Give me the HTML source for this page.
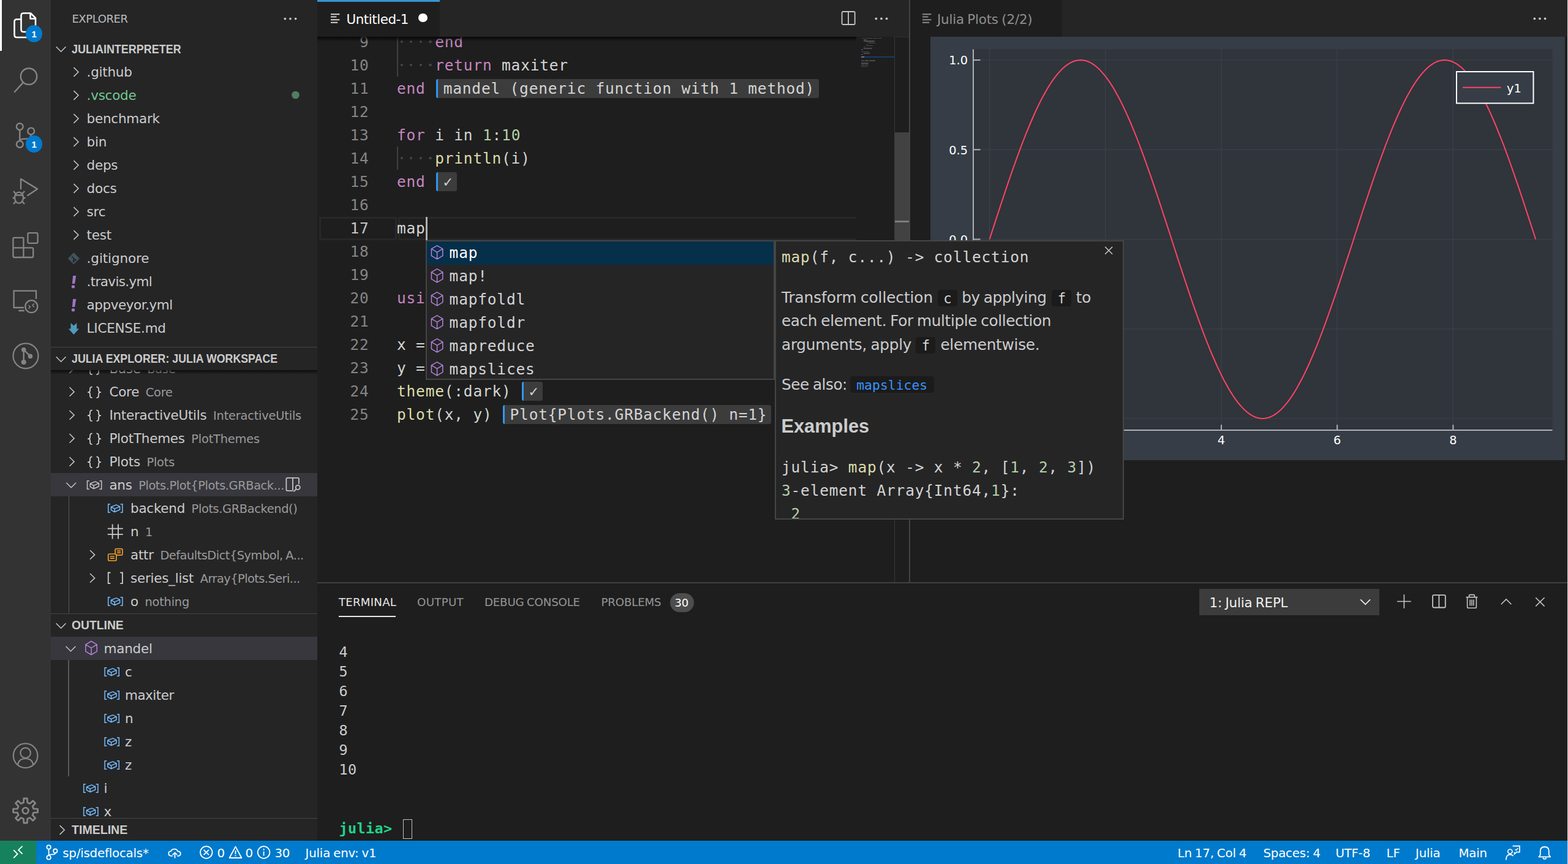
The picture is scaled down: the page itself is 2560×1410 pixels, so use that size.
<!DOCTYPE html>
<html lang="en"><head><meta charset="utf-8"><title>Untitled-1 - JuliaInterpreter - Visual Studio Code</title><style>
html,body{margin:0;padding:0;background:#1e1e1e;}
body{width:2560px;height:1410px;overflow:hidden;position:relative;font-family:'DejaVu Sans','Liberation Sans',sans-serif;color:#cccccc;}
div,span.t,svg{position:absolute;}
div{box-sizing:border-box;}
.t{white-space:pre;line-height:1;display:block;}
.ui{font-family:'DejaVu Sans','Liberation Sans',sans-serif;word-spacing:-0.05em;}
.uib{font-family:'Liberation Sans','DejaVu Sans',sans-serif;}
.mono{font-family:'DejaVu Sans Mono','Liberation Mono',monospace;}
svg{overflow:visible;}
</style></head>
<body>
<!-- p_activity -->
<div class="abs" style="left:0.00px;top:0.00px;width:83.00px;height:1372.00px;background:#333333;overflow:hidden;"><div style="left:0.00px;top:0.00px;width:3.00px;height:83.00px;background:#ffffff;"></div><svg style="left:0.00px;top:0.00px;" width="83.00" height="1372.00" viewBox="0 0 83.00 1372.00" fill="none"><g stroke="#fff" stroke-width="2.6" fill="none" stroke-linejoin="round"><path d="M34 31.5H27.5Q23.5 31.5 23.5 35.5V57Q23.5 61 27.5 61H44Q47.5 61 47.5 57V52"/><path d="M38.5 21.5H50L58 29.5V48Q58 52 54 52H38.5Q34.5 52 34.5 48V25.5Q34.5 21.5 38.5 21.5Z"/><path d="M49.5 22V30.5H57.5"/></g><g stroke="#858585" stroke-width="2.4" fill="none"><circle cx="47" cy="124.7" r="13.2"/><path d="M37.8 134.6L23.2 150.8"/></g><g stroke="#858585" stroke-width="2.4" fill="none"><circle cx="32.3" cy="206.6" r="5.4"/><circle cx="50.7" cy="214" r="5.4"/><circle cx="32.3" cy="235.4" r="5.4"/><path d="M32.3 212V230M50.7 219.4Q50.7 226.6 43 226.6H40Q32.3 226.6 32.3 231"/></g><g stroke="#858585" stroke-width="2.4" fill="none" stroke-linejoin="round"><path d="M34 309V292L61 308.4L44.4 319.4"/><ellipse cx="31" cy="322.6" rx="7" ry="9"/><path d="M24.5 318.5H37.5M22 312L25.5 316M40 312L36.5 316M20.5 323H24M38 323H41.5M22 333L25.5 329M40 333L36.5 329"/></g><g stroke="#858585" stroke-width="2.3" fill="none" stroke-linejoin="round"><rect x="45.4" y="380.2" width="16.2" height="16.6" rx="2"/><path d="M38.4 387.8H23.4Q21.4 387.8 21.4 389.8V418Q21.4 420 23.4 420H52.2Q54.2 420 54.2 418V406.3Q54.2 404.3 52.2 404.3H21.4M38.4 387.8V420"/></g><g stroke="#858585" stroke-width="2.3" fill="none"><path d="M59 488V474.6H22.6V502H39M30.4 507H39.7"/><circle cx="51.3" cy="500.2" r="10"/><path d="M46.6 498L49.4 500.9L46.6 503.8M55.8 495.4L53 498.3L55.8 501.2" stroke-width="1.6"/></g><g stroke="#858585" stroke-width="2.2" fill="none"><circle cx="42" cy="580.8" r="20.5"/><path d="M38.7 570.7V591M38.7 570.7L49.4 581.4" stroke-width="2.4"/></g><g fill="#858585"><circle cx="38.7" cy="570.7" r="3.8"/><circle cx="49.4" cy="581.4" r="3.8"/><circle cx="38.7" cy="591" r="4"/></g><g stroke="#858585" stroke-width="2.2" fill="none"><circle cx="41.6" cy="1233.2" r="19.8"/><circle cx="41.6" cy="1228.7" r="8.3"/><path d="M29 1248.2Q30.5 1238 41.6 1238Q52.7 1238 54.2 1248.2"/></g><path d="M38.5 1309.8L38.8 1303.0L44.4 1303.0L44.7 1309.8L48.8 1311.5L53.7 1306.8L57.8 1310.9L53.1 1315.8L54.8 1319.9L61.6 1320.2L61.6 1325.8L54.8 1326.1L53.1 1330.2L57.8 1335.1L53.7 1339.2L48.8 1334.5L44.7 1336.2L44.4 1343.0L38.8 1343.0L38.5 1336.2L34.4 1334.5L29.5 1339.2L25.4 1335.1L30.1 1330.2L28.4 1326.1L21.6 1325.8L21.6 1320.2L28.4 1319.9L30.1 1315.8L25.4 1310.9L29.5 1306.8L34.4 1311.5Z" stroke="#858585" stroke-width="2.8" fill="none" stroke-linejoin="round"/><circle cx="41.6" cy="1323" r="4.8" stroke="#858585" stroke-width="2.8" fill="none"/></svg><div style="left:41.70px;top:41.20px;width:27.60px;height:27.60px;background:#007acc;border-radius:50%;"></div><span class="t uib" style="left:51.40px;top:47.70px;font-size:15.00px;color:#fff;font-weight:700;">1</span><div style="left:41.70px;top:221.00px;width:27.60px;height:27.60px;background:#007acc;border-radius:50%;"></div><span class="t uib" style="left:51.40px;top:227.50px;font-size:15.00px;color:#fff;font-weight:700;">1</span></div>
<!-- p_sidebar -->
<div style="left:83.00px;top:0.00px;width:435.00px;height:1372.00px;background:#252526;overflow:hidden;"><div style="left:-83.00px;top:0.00px;width:518.00px;height:1372.00px;"><span class="t ui" style="left:117.40px;top:22.35px;font-size:18.02px;color:#bbbbbb;letter-spacing:-0.41px;">EXPLORER</span><svg style="left:0.00px;top:0.00px;" width="518.00" height="10.00" viewBox="0 0 518.00 10.00" fill="none"><path d="M91.7 76.3L99.6 84.2L107.5 76.3" stroke="#c5c5c5" stroke-width="1.55"/></svg><span class="t uib" style="left:117.40px;top:69.57px;font-size:20.00px;color:#cccccc;font-weight:700;transform:scaleX(0.898);transform-origin:0 0;">JULIAINTERPRETER</span><span class="t ui" style="left:141.60px;top:107.21px;font-size:21.50px;color:#cccccc;letter-spacing:-0.25px;">.github</span><span class="t ui" style="left:141.60px;top:145.21px;font-size:21.50px;color:#73c991;letter-spacing:-0.25px;">.vscode</span><span class="t ui" style="left:141.60px;top:183.21px;font-size:21.50px;color:#cccccc;letter-spacing:-0.25px;">benchmark</span><span class="t ui" style="left:141.60px;top:221.21px;font-size:21.50px;color:#cccccc;letter-spacing:-0.25px;">bin</span><span class="t ui" style="left:141.60px;top:259.21px;font-size:21.50px;color:#cccccc;letter-spacing:-0.25px;">deps</span><span class="t ui" style="left:141.60px;top:297.21px;font-size:21.50px;color:#cccccc;letter-spacing:-0.25px;">docs</span><span class="t ui" style="left:141.60px;top:335.21px;font-size:21.50px;color:#cccccc;letter-spacing:-0.25px;">src</span><span class="t ui" style="left:141.60px;top:373.21px;font-size:21.50px;color:#cccccc;letter-spacing:-0.25px;">test</span><span class="t ui" style="left:141.60px;top:411.21px;font-size:21.50px;color:#cccccc;letter-spacing:-0.10px;">.gitignore</span><span class="t ui" style="left:141.60px;top:449.21px;font-size:21.50px;color:#cccccc;letter-spacing:-0.64px;">.travis.yml</span><span class="t ui" style="left:141.60px;top:487.21px;font-size:21.50px;color:#cccccc;letter-spacing:-0.45px;">appveyor.yml</span><span class="t ui" style="left:141.60px;top:525.21px;font-size:21.50px;color:#cccccc;letter-spacing:-0.25px;">LICENSE.md</span><div style="left:0.00px;top:604.00px;width:518.00px;height:396.50px;overflow:hidden;"><div style="left:0.00px;top:-604.00px;width:518.00px;height:1410.00px;"><span class="t ui" style="left:178.4px;top:591.21px;font-size:21.50px;color:#cccccc;letter-spacing:-0.25px">Base<span style="font-size:19.46px;color:#9a9a9a;margin-left:10.5px;letter-spacing:-0.22px">Base</span></span><span class="t ui" style="left:178.4px;top:629.21px;font-size:21.50px;color:#cccccc;letter-spacing:-0.25px">Core<span style="font-size:19.46px;color:#9a9a9a;margin-left:10.5px;letter-spacing:-0.22px">Core</span></span><span class="t ui" style="left:178.4px;top:667.21px;font-size:21.50px;color:#cccccc;letter-spacing:-0.25px">InteractiveUtils<span style="font-size:19.46px;color:#9a9a9a;margin-left:10.5px;letter-spacing:-0.22px">InteractiveUtils</span></span><span class="t ui" style="left:178.4px;top:705.21px;font-size:21.50px;color:#cccccc;letter-spacing:-0.25px">PlotThemes<span style="font-size:19.46px;color:#9a9a9a;margin-left:10.5px;letter-spacing:-0.22px">PlotThemes</span></span><span class="t ui" style="left:178.4px;top:743.21px;font-size:21.50px;color:#cccccc;letter-spacing:-0.25px">Plots<span style="font-size:19.46px;color:#9a9a9a;margin-left:10.5px;letter-spacing:-0.22px">Plots</span></span><div style="left:83.00px;top:772.30px;width:435.00px;height:37.60px;background:#37373d;"></div><span class="t ui" style="left:178.4px;top:781.21px;font-size:21.50px;color:#cccccc;letter-spacing:-0.25px">ans<span style="font-size:19.46px;color:#9a9a9a;margin-left:10.5px;letter-spacing:-0.44px">Plots.Plot{Plots.GRBack...</span></span><span class="t ui" style="left:213.0px;top:819.21px;font-size:21.50px;color:#cccccc;letter-spacing:-0.25px">backend<span style="font-size:19.46px;color:#9a9a9a;margin-left:10.5px;letter-spacing:-0.41px">Plots.GRBackend()</span></span><span class="t ui" style="left:213.0px;top:857.21px;font-size:21.50px;color:#cccccc;letter-spacing:-0.25px">n<span style="font-size:19.46px;color:#9a9a9a;margin-left:10.5px;letter-spacing:-0.22px">1</span></span><span class="t ui" style="left:213.0px;top:895.21px;font-size:21.50px;color:#cccccc;letter-spacing:-0.25px">attr<span style="font-size:19.46px;color:#9a9a9a;margin-left:10.5px;letter-spacing:-0.52px">DefaultsDict{Symbol, A...</span></span><span class="t ui" style="left:213.0px;top:933.21px;font-size:21.50px;color:#cccccc;letter-spacing:-0.25px">series_list<span style="font-size:19.46px;color:#9a9a9a;margin-left:10.5px;letter-spacing:-0.58px">Array{Plots.Seri...</span></span><span class="t ui" style="left:213.0px;top:971.21px;font-size:21.50px;color:#cccccc;letter-spacing:-0.25px">o<span style="font-size:19.46px;color:#9a9a9a;margin-left:10.5px;letter-spacing:-0.22px">nothing</span></span><div style="left:111.60px;top:810.00px;width:1.60px;height:190.00px;background:#585858;"></div><svg style="left:0.00px;top:0.00px;" width="518.00" height="10.00" viewBox="0 0 518.00 10.00" fill="none"><path d="M113.5 594.0L121.1 601.4L113.5 608.8" stroke="#c5c5c5" stroke-width="1.55"/><g transform="translate(143.00 592.40)" stroke="#cccccc" stroke-width="1.8" fill="none" stroke-linejoin="round"><path d="M7.6 0.9C4.6 0.9 4 2.2 4 4.6V6.8C4 8.8 3 9.8 0.8 9.8C3 9.8 4 10.8 4 12.8V15C4 17.4 4.6 18.7 7.6 18.7M14.4 0.9C17.4 0.9 18 2.2 18 4.6V6.8C18 8.8 19 9.8 21.2 9.8C19 9.8 18 10.8 18 12.8V15C18 17.4 17.4 18.7 14.4 18.7"/></g><path d="M113.5 632.0L121.1 639.4L113.5 646.8" stroke="#c5c5c5" stroke-width="1.55"/><g transform="translate(143.00 630.40)" stroke="#cccccc" stroke-width="1.8" fill="none" stroke-linejoin="round"><path d="M7.6 0.9C4.6 0.9 4 2.2 4 4.6V6.8C4 8.8 3 9.8 0.8 9.8C3 9.8 4 10.8 4 12.8V15C4 17.4 4.6 18.7 7.6 18.7M14.4 0.9C17.4 0.9 18 2.2 18 4.6V6.8C18 8.8 19 9.8 21.2 9.8C19 9.8 18 10.8 18 12.8V15C18 17.4 17.4 18.7 14.4 18.7"/></g><path d="M113.5 670.0L121.1 677.4L113.5 684.8" stroke="#c5c5c5" stroke-width="1.55"/><g transform="translate(143.00 668.40)" stroke="#cccccc" stroke-width="1.8" fill="none" stroke-linejoin="round"><path d="M7.6 0.9C4.6 0.9 4 2.2 4 4.6V6.8C4 8.8 3 9.8 0.8 9.8C3 9.8 4 10.8 4 12.8V15C4 17.4 4.6 18.7 7.6 18.7M14.4 0.9C17.4 0.9 18 2.2 18 4.6V6.8C18 8.8 19 9.8 21.2 9.8C19 9.8 18 10.8 18 12.8V15C18 17.4 17.4 18.7 14.4 18.7"/></g><path d="M113.5 708.0L121.1 715.4L113.5 722.8" stroke="#c5c5c5" stroke-width="1.55"/><g transform="translate(143.00 706.40)" stroke="#cccccc" stroke-width="1.8" fill="none" stroke-linejoin="round"><path d="M7.6 0.9C4.6 0.9 4 2.2 4 4.6V6.8C4 8.8 3 9.8 0.8 9.8C3 9.8 4 10.8 4 12.8V15C4 17.4 4.6 18.7 7.6 18.7M14.4 0.9C17.4 0.9 18 2.2 18 4.6V6.8C18 8.8 19 9.8 21.2 9.8C19 9.8 18 10.8 18 12.8V15C18 17.4 17.4 18.7 14.4 18.7"/></g><path d="M113.5 746.0L121.1 753.4L113.5 760.8" stroke="#c5c5c5" stroke-width="1.55"/><g transform="translate(143.00 744.40)" stroke="#cccccc" stroke-width="1.8" fill="none" stroke-linejoin="round"><path d="M7.6 0.9C4.6 0.9 4 2.2 4 4.6V6.8C4 8.8 3 9.8 0.8 9.8C3 9.8 4 10.8 4 12.8V15C4 17.4 4.6 18.7 7.6 18.7M14.4 0.9C17.4 0.9 18 2.2 18 4.6V6.8C18 8.8 19 9.8 21.2 9.8C19 9.8 18 10.8 18 12.8V15C18 17.4 17.4 18.7 14.4 18.7"/></g><path d="M108.3 787.8L116.2 795.7L124.1 787.8" stroke="#c5c5c5" stroke-width="1.55"/><g transform="translate(141.60 783.90)" stroke="#c5c5c5" stroke-width="1.5" fill="none"><path d="M4.2 0.8H0.9V14.4H4.2M20.8 0.8H24.1V14.4H20.8" /><path d="M5.6 5.4L14 2L19.8 4.7L11.4 8.5ZM5.6 5.4V10.5L11.4 13.6V8.5M11.4 13.6L19.8 9.9V4.7" stroke-linejoin="round"/></g><g transform="translate(175.80 821.90)" stroke="#75beff" stroke-width="1.5" fill="none"><path d="M4.2 0.8H0.9V14.4H4.2M20.8 0.8H24.1V14.4H20.8" /><path d="M5.6 5.4L14 2L19.8 4.7L11.4 8.5ZM5.6 5.4V10.5L11.4 13.6V8.5M11.4 13.6L19.8 9.9V4.7" stroke-linejoin="round"/></g><g transform="translate(175.80 855.40)" stroke="#cccccc" stroke-width="1.8" fill="none"><path d="M7.8 0V24M17.2 0V24M0 7.3H25M0 16.7H25"/></g><path d="M147.0 898.0L154.6 905.4L147.0 912.8" stroke="#c5c5c5" stroke-width="1.55"/><g transform="translate(175.80 894.80)" stroke="#ee9d28" stroke-width="1.7" fill="none"><rect x="12.3" y="0.9" width="11.8" height="10.2" rx="1.8"/><path d="M15.3 4.4H21.3M15.3 7.4H21.3"/><rect x="0.9" y="9.2" width="13.2" height="11" rx="1.8" fill="#252526"/><path d="M3.9 13.2H11.1M3.9 16.4H11.1"/></g><path d="M147.0 936.0L154.6 943.4L147.0 950.8" stroke="#c5c5c5" stroke-width="1.55"/><g transform="translate(175.80 933.60)" stroke="#cccccc" stroke-width="1.8" fill="none"><path d="M4.6 0.9H0.9V18.6H4.6M20.4 0.9H24.1V18.6H20.4"/></g><g transform="translate(175.80 973.90)" stroke="#75beff" stroke-width="1.5" fill="none"><path d="M4.2 0.8H0.9V14.4H4.2M20.8 0.8H24.1V14.4H20.8" /><path d="M5.6 5.4L14 2L19.8 4.7L11.4 8.5ZM5.6 5.4V10.5L11.4 13.6V8.5M11.4 13.6L19.8 9.9V4.7" stroke-linejoin="round"/></g><g stroke="#c5c5c5" stroke-width="1.8" fill="none"><path d="M488 790V781.8Q488 779.8 486 779.8H469.4Q467.4 779.8 467.4 781.8V798.8Q467.4 800.8 469.4 800.8H477.8M478 779.8V800.8"/><circle cx="486.3" cy="795.4" r="3.5"/><path d="M483.8 798L479.4 802.4"/></g></svg></div></div><div style="left:83.00px;top:604.00px;width:435.00px;height:7.00px;background:linear-gradient(#000000aa,#00000000);"></div><div style="left:83.00px;top:565.60px;width:435.00px;height:1.50px;background:#454546;"></div><svg style="left:0.00px;top:0.00px;" width="518.00" height="10.00" viewBox="0 0 518.00 10.00" fill="none"><path d="M91.7 582.3L99.6 590.2L107.5 582.3" stroke="#c5c5c5" stroke-width="1.55"/></svg><span class="t uib" style="left:117.40px;top:574.77px;font-size:20.00px;color:#cccccc;font-weight:700;transform:scaleX(0.889);transform-origin:0 0;">JULIA EXPLORER: JULIA WORKSPACE</span><div style="left:83.00px;top:1000.60px;width:435.00px;height:1.50px;background:#454546;"></div><svg style="left:0.00px;top:0.00px;" width="518.00" height="10.00" viewBox="0 0 518.00 10.00" fill="none"><path d="M91.7 1017.3L99.6 1025.2L107.5 1017.3" stroke="#c5c5c5" stroke-width="1.55"/></svg><span class="t uib" style="left:117.40px;top:1010.37px;font-size:20.00px;color:#cccccc;font-weight:700;transform:scaleX(0.965);transform-origin:0 0;">OUTLINE</span><div style="left:0.00px;top:1039.00px;width:518.00px;height:296.00px;overflow:hidden;"><div style="left:0.00px;top:-1039.00px;width:518.00px;height:1410.00px;"><div style="left:83.00px;top:1039.30px;width:435.00px;height:37.60px;background:#37373d;"></div><span class="t ui" style="left:169.60px;top:1047.81px;font-size:21.50px;color:#cccccc;letter-spacing:-0.25px;">mandel</span><span class="t ui" style="left:204.00px;top:1085.81px;font-size:21.50px;color:#cccccc;letter-spacing:-0.25px;">c</span><span class="t ui" style="left:204.00px;top:1123.81px;font-size:21.50px;color:#cccccc;letter-spacing:-0.50px;">maxiter</span><span class="t ui" style="left:204.00px;top:1161.81px;font-size:21.50px;color:#cccccc;letter-spacing:-0.25px;">n</span><span class="t ui" style="left:204.00px;top:1199.81px;font-size:21.50px;color:#cccccc;letter-spacing:-0.25px;">z</span><span class="t ui" style="left:204.00px;top:1237.81px;font-size:21.50px;color:#cccccc;letter-spacing:-0.25px;">z</span><span class="t ui" style="left:169.60px;top:1275.81px;font-size:21.50px;color:#cccccc;letter-spacing:-0.25px;">i</span><span class="t ui" style="left:169.60px;top:1313.81px;font-size:21.50px;color:#cccccc;letter-spacing:-0.25px;">x</span><div style="left:111.40px;top:1077.00px;width:1.60px;height:190.00px;background:#585858;"></div><svg style="left:0.00px;top:0.00px;" width="518.00" height="10.00" viewBox="0 0 518.00 10.00" fill="none"><path d="M107.6 1054.8L115.5 1062.7L123.4 1054.8" stroke="#c5c5c5" stroke-width="1.55"/><g transform="translate(138.00 1045.50)" stroke="#b180d7" stroke-width="1.55" fill="none"><path d="M11 1L20.2 6.3V17.6L11 23L1.8 17.6V6.3ZM1.8 6.3L11 11.8L20.2 6.3M11 11.8V23" stroke-linejoin="round"/></g><g transform="translate(170.20 1088.90)" stroke="#75beff" stroke-width="1.5" fill="none"><path d="M4.2 0.8H0.9V14.4H4.2M20.8 0.8H24.1V14.4H20.8" /><path d="M5.6 5.4L14 2L19.8 4.7L11.4 8.5ZM5.6 5.4V10.5L11.4 13.6V8.5M11.4 13.6L19.8 9.9V4.7" stroke-linejoin="round"/></g><g transform="translate(170.20 1126.90)" stroke="#75beff" stroke-width="1.5" fill="none"><path d="M4.2 0.8H0.9V14.4H4.2M20.8 0.8H24.1V14.4H20.8" /><path d="M5.6 5.4L14 2L19.8 4.7L11.4 8.5ZM5.6 5.4V10.5L11.4 13.6V8.5M11.4 13.6L19.8 9.9V4.7" stroke-linejoin="round"/></g><g transform="translate(170.20 1164.90)" stroke="#75beff" stroke-width="1.5" fill="none"><path d="M4.2 0.8H0.9V14.4H4.2M20.8 0.8H24.1V14.4H20.8" /><path d="M5.6 5.4L14 2L19.8 4.7L11.4 8.5ZM5.6 5.4V10.5L11.4 13.6V8.5M11.4 13.6L19.8 9.9V4.7" stroke-linejoin="round"/></g><g transform="translate(170.20 1202.90)" stroke="#75beff" stroke-width="1.5" fill="none"><path d="M4.2 0.8H0.9V14.4H4.2M20.8 0.8H24.1V14.4H20.8" /><path d="M5.6 5.4L14 2L19.8 4.7L11.4 8.5ZM5.6 5.4V10.5L11.4 13.6V8.5M11.4 13.6L19.8 9.9V4.7" stroke-linejoin="round"/></g><g transform="translate(170.20 1240.90)" stroke="#75beff" stroke-width="1.5" fill="none"><path d="M4.2 0.8H0.9V14.4H4.2M20.8 0.8H24.1V14.4H20.8" /><path d="M5.6 5.4L14 2L19.8 4.7L11.4 8.5ZM5.6 5.4V10.5L11.4 13.6V8.5M11.4 13.6L19.8 9.9V4.7" stroke-linejoin="round"/></g><g transform="translate(135.80 1278.90)" stroke="#75beff" stroke-width="1.5" fill="none"><path d="M4.2 0.8H0.9V14.4H4.2M20.8 0.8H24.1V14.4H20.8" /><path d="M5.6 5.4L14 2L19.8 4.7L11.4 8.5ZM5.6 5.4V10.5L11.4 13.6V8.5M11.4 13.6L19.8 9.9V4.7" stroke-linejoin="round"/></g><g transform="translate(135.80 1316.90)" stroke="#75beff" stroke-width="1.5" fill="none"><path d="M4.2 0.8H0.9V14.4H4.2M20.8 0.8H24.1V14.4H20.8" /><path d="M5.6 5.4L14 2L19.8 4.7L11.4 8.5ZM5.6 5.4V10.5L11.4 13.6V8.5M11.4 13.6L19.8 9.9V4.7" stroke-linejoin="round"/></g></svg></div></div><div style="left:83.00px;top:1334.60px;width:435.00px;height:1.50px;background:#454546;"></div><svg style="left:0.00px;top:0.00px;" width="518.00" height="10.00" viewBox="0 0 518.00 10.00" fill="none"><path d="M97.6 1347.1L105.2 1354.5L97.6 1361.9" stroke="#c5c5c5" stroke-width="1.55"/></svg><span class="t uib" style="left:117.40px;top:1344.37px;font-size:20.00px;color:#cccccc;font-weight:700;transform:scaleX(0.978);transform-origin:0 0;">TIMELINE</span><svg style="left:0.00px;top:0.00px;" width="518.00" height="10.00" viewBox="0 0 518.00 10.00" fill="none"><circle cx="465.4" cy="30.6" r="1.9" fill="#c5c5c5"/><circle cx="474.0" cy="30.6" r="1.9" fill="#c5c5c5"/><circle cx="482.6" cy="30.6" r="1.9" fill="#c5c5c5"/><path d="M120.4 110.1L128.0 117.5L120.4 124.9" stroke="#c5c5c5" stroke-width="1.55"/><path d="M120.4 148.1L128.0 155.5L120.4 162.9" stroke="#c5c5c5" stroke-width="1.55"/><path d="M120.4 186.1L128.0 193.5L120.4 200.9" stroke="#c5c5c5" stroke-width="1.55"/><path d="M120.4 224.1L128.0 231.5L120.4 238.9" stroke="#c5c5c5" stroke-width="1.55"/><path d="M120.4 262.1L128.0 269.5L120.4 276.9" stroke="#c5c5c5" stroke-width="1.55"/><path d="M120.4 300.1L128.0 307.5L120.4 314.9" stroke="#c5c5c5" stroke-width="1.55"/><path d="M120.4 338.1L128.0 345.5L120.4 352.9" stroke="#c5c5c5" stroke-width="1.55"/><path d="M120.4 376.1L128.0 383.5L120.4 390.9" stroke="#c5c5c5" stroke-width="1.55"/><circle cx="482.5" cy="155" r="6.3" fill="#73c991" opacity="0.55"/><g transform="translate(120.40 421.80)" ><path d="M0 -9.6L9.6 0L0 9.6L-9.6 0Z" fill="#41535b"/><path d="M-3.2 -3.4L2.4 2.2M-0.2 -0.6V5" stroke="#252526" stroke-width="1.6"/><circle cx="2.6" cy="2.4" r="1.5" fill="#252526"/><circle cx="-0.2" cy="5" r="1.5" fill="#252526"/></g><g transform="translate(120.00 459.60)" ><path d="M-0.9 -9.5L4.2 -9.5L2.1 3.5L-2.1 3.5Z" fill="#a074c4"/><ellipse cx="-0.5" cy="8.2" rx="2.7" ry="2.6" fill="#a074c4"/></g><g transform="translate(120.00 497.60)" ><path d="M-0.9 -9.5L4.2 -9.5L2.1 3.5L-2.1 3.5Z" fill="#a074c4"/><ellipse cx="-0.5" cy="8.2" rx="2.7" ry="2.6" fill="#a074c4"/></g><g transform="translate(111.80 527.00)" ><path d="M3.7 0L8.6 4.6L13.5 0V9.4H17.2L8.6 19L0 9.4H3.7Z" fill="#519aba"/></g></svg></div></div>
<!-- p_editor -->
<div style="left:518.00px;top:60.00px;width:966.00px;height:890.00px;background:#1e1e1e;overflow:hidden;"><div style="left:-518.00px;top:-60.00px;width:2560.00px;height:1410.00px;"><div style="left:520.60px;top:353.60px;width:127.40px;height:38.40px;border:3px solid #282828;"></div><div style="left:650.40px;top:353.60px;width:748.00px;height:38.40px;border:3px solid #282828;border-right:0;"></div><div style="left:648.40px;top:40.00px;width:1.40px;height:85.00px;background:#404040;"></div><div style="left:648.40px;top:239.00px;width:1.40px;height:38.00px;background:#404040;"></div><span class="t mono" style="left:586.95px;top:57.47px;font-size:24.50px;color:#858585;letter-spacing:0.80px;">9</span><span class="t mono" style="left:571.40px;top:95.47px;font-size:24.50px;color:#858585;letter-spacing:0.80px;">10</span><span class="t mono" style="left:571.40px;top:133.47px;font-size:24.50px;color:#858585;letter-spacing:0.80px;">11</span><span class="t mono" style="left:571.40px;top:171.47px;font-size:24.50px;color:#858585;letter-spacing:0.80px;">12</span><span class="t mono" style="left:571.40px;top:209.47px;font-size:24.50px;color:#858585;letter-spacing:0.80px;">13</span><span class="t mono" style="left:571.40px;top:247.47px;font-size:24.50px;color:#858585;letter-spacing:0.80px;">14</span><span class="t mono" style="left:571.40px;top:285.47px;font-size:24.50px;color:#858585;letter-spacing:0.80px;">15</span><span class="t mono" style="left:571.40px;top:323.47px;font-size:24.50px;color:#858585;letter-spacing:0.80px;">16</span><span class="t mono" style="left:571.40px;top:361.47px;font-size:24.50px;color:#c6c6c6;letter-spacing:0.80px;">17</span><span class="t mono" style="left:571.40px;top:399.47px;font-size:24.50px;color:#858585;letter-spacing:0.80px;">18</span><span class="t mono" style="left:571.40px;top:437.47px;font-size:24.50px;color:#858585;letter-spacing:0.80px;">19</span><span class="t mono" style="left:571.40px;top:475.47px;font-size:24.50px;color:#858585;letter-spacing:0.80px;">20</span><span class="t mono" style="left:571.40px;top:513.47px;font-size:24.50px;color:#858585;letter-spacing:0.80px;">21</span><span class="t mono" style="left:571.40px;top:551.47px;font-size:24.50px;color:#858585;letter-spacing:0.80px;">22</span><span class="t mono" style="left:571.40px;top:589.47px;font-size:24.50px;color:#858585;letter-spacing:0.80px;">23</span><span class="t mono" style="left:571.40px;top:627.47px;font-size:24.50px;color:#858585;letter-spacing:0.80px;">24</span><span class="t mono" style="left:571.40px;top:665.47px;font-size:24.50px;color:#858585;letter-spacing:0.80px;">25</span><div style="left:653.68px;top:66.20px;width:4.20px;height:4.20px;background:#464646;border-radius:50%;"></div><div style="left:669.23px;top:66.20px;width:4.20px;height:4.20px;background:#464646;border-radius:50%;"></div><div style="left:684.78px;top:66.20px;width:4.20px;height:4.20px;background:#464646;border-radius:50%;"></div><div style="left:700.33px;top:66.20px;width:4.20px;height:4.20px;background:#464646;border-radius:50%;"></div><span class="t mono" style="left:710.21px;top:57.47px;font-size:24.50px;letter-spacing:0.80px;"><span style="color:#c586c0">end</span></span><div style="left:653.68px;top:104.20px;width:4.20px;height:4.20px;background:#464646;border-radius:50%;"></div><div style="left:669.23px;top:104.20px;width:4.20px;height:4.20px;background:#464646;border-radius:50%;"></div><div style="left:684.78px;top:104.20px;width:4.20px;height:4.20px;background:#464646;border-radius:50%;"></div><div style="left:700.33px;top:104.20px;width:4.20px;height:4.20px;background:#464646;border-radius:50%;"></div><span class="t mono" style="left:710.21px;top:95.47px;font-size:24.50px;letter-spacing:0.80px;"><span style="color:#c586c0">return</span><span style="color:#d4d4d4"> maxiter</span></span><span class="t mono" style="left:648.00px;top:133.47px;font-size:24.50px;letter-spacing:0.80px;"><span style="color:#c586c0">end</span></span><div style="left:711.71px;top:128.60px;width:625.53px;height:31.00px;background:#3c3c3c;border-left:3.4px solid #2f98f5;border-radius:3px;"></div><span class="t mono" style="left:723.71px;top:133.47px;font-size:24.50px;color:#d4d4d4;letter-spacing:0.80px;">mandel (generic function with 1 method)</span><span class="t mono" style="left:648.00px;top:209.47px;font-size:24.50px;letter-spacing:0.80px;"><span style="color:#c586c0">for</span><span style="color:#d4d4d4"> i in </span><span style="color:#b5cea8">1</span><span style="color:#d4d4d4">:</span><span style="color:#b5cea8">10</span></span><div style="left:653.68px;top:256.20px;width:4.20px;height:4.20px;background:#464646;border-radius:50%;"></div><div style="left:669.23px;top:256.20px;width:4.20px;height:4.20px;background:#464646;border-radius:50%;"></div><div style="left:684.78px;top:256.20px;width:4.20px;height:4.20px;background:#464646;border-radius:50%;"></div><div style="left:700.33px;top:256.20px;width:4.20px;height:4.20px;background:#464646;border-radius:50%;"></div><span class="t mono" style="left:710.21px;top:247.47px;font-size:24.50px;letter-spacing:0.80px;"><span style="color:#dcdcaa">println</span><span style="color:#d4d4d4">(i)</span></span><span class="t mono" style="left:648.00px;top:285.47px;font-size:24.50px;letter-spacing:0.80px;"><span style="color:#c586c0">end</span></span><div style="left:711.71px;top:280.60px;width:34.55px;height:31.00px;background:#3c3c3c;border-left:3.4px solid #2f98f5;border-radius:3px;"></div><span class="t mono" style="left:723.71px;top:285.47px;font-size:24.50px;color:#d4d4d4;letter-spacing:0.80px;">✓</span><span class="t mono" style="left:648.00px;top:361.47px;font-size:24.50px;letter-spacing:0.80px;"><span style="color:#d4d4d4">map</span></span><div style="left:695.00px;top:353.60px;width:3.00px;height:38.40px;background:#aeafad;"></div><span class="t mono" style="left:648.00px;top:475.47px;font-size:24.50px;letter-spacing:0.80px;"><span style="color:#c586c0">using</span><span style="color:#d4d4d4"> Plots, PlotThemes</span></span><span class="t mono" style="left:648.00px;top:551.47px;font-size:24.50px;letter-spacing:0.80px;"><span style="color:#d4d4d4">x = </span><span style="color:#b5cea8">0</span><span style="color:#d4d4d4">:</span><span style="color:#b5cea8">0.01</span><span style="color:#d4d4d4">:</span><span style="color:#b5cea8">3</span><span style="color:#d4d4d4">π</span></span><span class="t mono" style="left:648.00px;top:589.47px;font-size:24.50px;letter-spacing:0.80px;"><span style="color:#d4d4d4">y = </span><span style="color:#dcdcaa">sin</span><span style="color:#d4d4d4">.(x)</span></span><span class="t mono" style="left:648.00px;top:627.47px;font-size:24.50px;letter-spacing:0.80px;"><span style="color:#dcdcaa">theme</span><span style="color:#d4d4d4">(:dark)</span></span><div style="left:851.68px;top:622.60px;width:34.55px;height:31.00px;background:#3c3c3c;border-left:3.4px solid #2f98f5;border-radius:3px;"></div><span class="t mono" style="left:863.68px;top:627.47px;font-size:24.50px;color:#d4d4d4;letter-spacing:0.80px;">✓</span><span class="t mono" style="left:648.00px;top:665.47px;font-size:24.50px;letter-spacing:0.80px;"><span style="color:#dcdcaa">plot</span><span style="color:#d4d4d4">(x, y)</span></span><div style="left:820.57px;top:660.60px;width:438.90px;height:31.00px;background:#3c3c3c;border-left:3.4px solid #2f98f5;border-radius:3px;"></div><span class="t mono" style="left:832.57px;top:665.47px;font-size:24.50px;color:#d4d4d4;letter-spacing:0.80px;">Plot{Plots.GRBackend() n=1}</span><div style="left:1405.89px;top:61.90px;width:8.19px;height:1.40px;background:#4f8fd0;opacity:.3;"></div><div style="left:1415.07px;top:61.90px;width:8.69px;height:1.40px;background:#c8c39a;opacity:.3;"></div><div style="left:1425.00px;top:61.90px;width:6.70px;height:1.40px;background:#b4b4b4;opacity:.3;"></div><div style="left:1433.20px;top:61.90px;width:0.74px;height:1.40px;background:#b4b4b4;opacity:.3;"></div><div style="left:1434.94px;top:61.90px;width:3.97px;height:1.40px;background:#c0c0b0;opacity:.3;"></div><div style="left:1409.86px;top:64.13px;width:4.97px;height:1.40px;background:#a8a8a8;opacity:.3;"></div><div style="left:1409.86px;top:66.12px;width:17.87px;height:1.40px;background:#a8a8a8;opacity:.3;"></div><div style="left:1413.83px;top:68.10px;width:13.41px;height:1.40px;background:#a8a8a8;opacity:.3;"></div><div style="left:1418.30px;top:70.09px;width:11.92px;height:1.40px;background:#a8a8a8;opacity:.3;"></div><div style="left:1413.83px;top:71.98px;width:3.23px;height:1.40px;background:#a890a8;opacity:.3;"></div><div style="left:1413.83px;top:74.06px;width:11.42px;height:1.40px;background:#a8a8a8;opacity:.3;"></div><div style="left:1409.86px;top:76.05px;width:3.23px;height:1.40px;background:#a890a8;opacity:.3;"></div><div style="left:1409.86px;top:78.28px;width:14.40px;height:1.40px;background:#a8a8a8;opacity:.3;"></div><div style="left:1405.89px;top:80.27px;width:3.23px;height:1.40px;background:#a890a8;opacity:.3;"></div><div style="left:1405.89px;top:83.99px;width:13.41px;height:1.40px;background:#a8a8a8;opacity:.3;"></div><div style="left:1409.86px;top:86.23px;width:10.18px;height:1.40px;background:#b4b09a;opacity:.3;"></div><div style="left:1405.89px;top:88.21px;width:3.23px;height:1.40px;background:#a890a8;opacity:.3;"></div><div style="left:1405.89px;top:98.14px;width:5.21px;height:1.40px;background:#a890a8;opacity:.3;"></div><div style="left:1412.10px;top:98.14px;width:5.46px;height:1.40px;background:#b4b4b4;opacity:.3;"></div><div style="left:1419.05px;top:98.14px;width:10.18px;height:1.40px;background:#b4b4b4;opacity:.3;"></div><div style="left:1405.89px;top:102.11px;width:12.41px;height:1.40px;background:#a8a8a8;opacity:.3;"></div><div style="left:1405.89px;top:104.10px;width:11.17px;height:1.40px;background:#a8a8a8;opacity:.3;"></div><div style="left:1405.89px;top:106.09px;width:5.46px;height:1.40px;background:#b4b09a;opacity:.3;"></div><div style="left:1412.34px;top:106.09px;width:5.71px;height:1.40px;background:#a8a8a8;opacity:.3;"></div><div style="left:1405.89px;top:108.07px;width:9.93px;height:1.40px;background:#b4b09a;opacity:.3;"></div><div style="left:1405.89px;top:91.98px;width:54.12px;height:1.80px;background:#183c66;"></div><div style="left:1405.89px;top:92.18px;width:5.21px;height:1.50px;background:#9ab0cc;opacity:.55;"></div><div style="left:1460.00px;top:60.00px;width:1.20px;height:890.00px;background:#383838;"></div><div style="left:1460.00px;top:60.00px;width:24.00px;height:1.20px;background:#303030;"></div><div style="left:1461.00px;top:216.00px;width:23.00px;height:440.00px;background:#424242;"></div><div style="left:1461.00px;top:359.50px;width:23.00px;height:3.60px;background:#7c7c7c;"></div><div style="left:518.00px;top:60.00px;width:880.00px;height:8.00px;background:linear-gradient(#000000c0,#00000000);"></div></div></div><div style="left:518.00px;top:0.00px;width:966.00px;height:60.00px;background:#252526;"></div><div style="left:518.00px;top:0.00px;width:200.00px;height:60.00px;background:#1e1e1e;border-top:3px solid #3794d1;"></div><span class="t ui" style="left:565.50px;top:21.21px;font-size:21.50px;color:#ffffff;letter-spacing:-0.50px;">Untitled-1</span><div style="left:683.20px;top:21.80px;width:14.60px;height:14.60px;background:#ffffff;border-radius:50%;"></div><svg style="left:0.00px;top:0.00px;" width="10.00" height="10.00" viewBox="0 0 10.00 10.00" fill="none"><g transform="translate(540.00 22.20)" ><path d="M0 1H14.4M0 5.2H9.4M0 10H14.4M0 14.5H11.2" stroke="#d4d4d4" stroke-width="2"/></g><g transform="translate(1373.70 18.10)" stroke="#c5c5c5" stroke-width="1.8" fill="none"><rect x="0.9" y="0.9" width="21.1" height="21.0" rx="1.8"/><path d="M11.4 0.9V21.9"/></g><circle cx="1430.4" cy="30.4" r="1.9" fill="#c5c5c5"/><circle cx="1439.0" cy="30.4" r="1.9" fill="#c5c5c5"/><circle cx="1447.6" cy="30.4" r="1.9" fill="#c5c5c5"/></svg><div style="left:1484.00px;top:0.00px;width:2.00px;height:950.00px;background:#444444;"></div>
<!-- p_plot -->
<div style="left:1486.00px;top:0.00px;width:1074.00px;height:60.00px;background:#252526;"></div><div style="left:1486.00px;top:0.00px;width:248.00px;height:60.00px;background:#1e1e1e;"></div><span class="t ui" style="left:1530.00px;top:21.41px;font-size:21.50px;color:#8e8e8e;letter-spacing:-0.25px;">Julia Plots (2/2)</span><svg style="left:0.00px;top:0.00px;" width="10.00" height="10.00" viewBox="0 0 10.00 10.00" fill="none"><g transform="translate(1506.00 22.20)" ><path d="M0 1H14.4M0 5.2H9.4M0 10H14.4M0 14.5H11.2" stroke="#8a8a8a" stroke-width="2"/></g><circle cx="2505.4" cy="30.4" r="1.9" fill="#c5c5c5"/><circle cx="2514.0" cy="30.4" r="1.9" fill="#c5c5c5"/><circle cx="2522.6" cy="30.4" r="1.9" fill="#c5c5c5"/></svg><div style="left:1519.00px;top:59.60px;width:1036.00px;height:691.00px;background:#363d46;overflow:hidden;"><svg style="left:-1519px;top:-59.6px" width="2560" height="1410" viewBox="0 0 2560 1410"><rect x="1590.0" y="80.5" width="944.5" height="620.3" fill="#30343b"/><path d="M1615.6 80.5V700.8M1804.8 80.5V700.8M1994.0 80.5V700.8M2183.2 80.5V700.8M2372.4 80.5V700.8M1590.0 98.0H2534.5M1590.0 244.2H2534.5M1590.0 390.5H2534.5M1590.0 536.8H2534.5M1590.0 683.0H2534.5" stroke="#3c414a" stroke-width="1.2"/><path d="M1589.0 80.5V703.0M1588.0 702.0H2534.5M1615.6 701.8V693.3M1804.8 701.8V693.3M1994.0 701.8V693.3M2183.2 701.8V693.3M2372.4 701.8V693.3M1589.0 98.0H1600.6M1589.0 244.2H1600.6M1589.0 390.5H1600.6M1589.0 536.8H1600.6M1589.0 683.0H1600.6" stroke="#adb2b7" stroke-width="2"/><path d="M1615.6 390.5L1619.3 379.0L1623.0 367.6L1626.7 356.1L1630.5 344.7L1634.2 333.4L1637.9 322.2L1641.6 311.1L1645.3 300.1L1649.0 289.3L1652.7 278.6L1656.5 268.0L1660.2 257.7L1663.9 247.6L1667.6 237.7L1671.3 228.0L1675.0 218.6L1678.8 209.4L1682.5 200.5L1686.2 192.0L1689.9 183.7L1693.6 175.7L1697.3 168.1L1701.0 160.8L1704.8 153.9L1708.5 147.3L1712.2 141.1L1715.9 135.3L1719.6 129.9L1723.3 124.9L1727.0 120.3L1730.8 116.1L1734.5 112.3L1738.2 109.0L1741.9 106.1L1745.6 103.6L1749.3 101.6L1753.1 100.0L1756.8 98.9L1760.5 98.2L1764.2 98.0L1767.9 98.2L1771.6 98.9L1775.3 100.0L1779.1 101.6L1782.8 103.6L1786.5 106.1L1790.2 109.0L1793.9 112.3L1797.6 116.1L1801.3 120.3L1805.1 124.9L1808.8 129.9L1812.5 135.3L1816.2 141.1L1819.9 147.3L1823.6 153.9L1827.4 160.8L1831.1 168.1L1834.8 175.7L1838.5 183.7L1842.2 192.0L1845.9 200.5L1849.6 209.4L1853.4 218.6L1857.1 228.0L1860.8 237.7L1864.5 247.6L1868.2 257.7L1871.9 268.0L1875.6 278.6L1879.4 289.3L1883.1 300.1L1886.8 311.1L1890.5 322.2L1894.2 333.4L1897.9 344.7L1901.6 356.1L1905.4 367.6L1909.1 379.0L1912.8 390.5L1916.5 402.0L1920.2 413.4L1923.9 424.9L1927.7 436.3L1931.4 447.6L1935.1 458.8L1938.8 469.9L1942.5 480.9L1946.2 491.7L1949.9 502.4L1953.7 513.0L1957.4 523.3L1961.1 533.4L1964.8 543.3L1968.5 553.0L1972.2 562.4L1975.9 571.6L1979.7 580.5L1983.4 589.0L1987.1 597.3L1990.8 605.3L1994.5 612.9L1998.2 620.2L2002.0 627.1L2005.7 633.7L2009.4 639.9L2013.1 645.7L2016.8 651.1L2020.5 656.1L2024.2 660.7L2028.0 664.9L2031.7 668.7L2035.4 672.0L2039.1 674.9L2042.8 677.4L2046.5 679.4L2050.2 681.0L2054.0 682.1L2057.7 682.8L2061.4 683.0L2065.1 682.8L2068.8 682.1L2072.5 681.0L2076.3 679.4L2080.0 677.4L2083.7 674.9L2087.4 672.0L2091.1 668.7L2094.8 664.9L2098.5 660.7L2102.3 656.1L2106.0 651.1L2109.7 645.7L2113.4 639.9L2117.1 633.7L2120.8 627.1L2124.5 620.2L2128.3 612.9L2132.0 605.3L2135.7 597.3L2139.4 589.0L2143.1 580.5L2146.8 571.6L2150.6 562.4L2154.3 553.0L2158.0 543.3L2161.7 533.4L2165.4 523.3L2169.1 513.0L2172.8 502.4L2176.6 491.7L2180.3 480.9L2184.0 469.9L2187.7 458.8L2191.4 447.6L2195.1 436.3L2198.8 424.9L2202.6 413.4L2206.3 402.0L2210.0 390.5L2213.7 379.0L2217.4 367.6L2221.1 356.1L2224.8 344.7L2228.6 333.4L2232.3 322.2L2236.0 311.1L2239.7 300.1L2243.4 289.3L2247.1 278.6L2250.9 268.0L2254.6 257.7L2258.3 247.6L2262.0 237.7L2265.7 228.0L2269.4 218.6L2273.1 209.4L2276.9 200.5L2280.6 192.0L2284.3 183.7L2288.0 175.7L2291.7 168.1L2295.4 160.8L2299.1 153.9L2302.9 147.3L2306.6 141.1L2310.3 135.3L2314.0 129.9L2317.7 124.9L2321.4 120.3L2325.2 116.1L2328.9 112.3L2332.6 109.0L2336.3 106.1L2340.0 103.6L2343.7 101.6L2347.4 100.0L2351.2 98.9L2354.9 98.2L2358.6 98.0L2362.3 98.2L2366.0 98.9L2369.7 100.0L2373.4 101.6L2377.2 103.6L2380.9 106.1L2384.6 109.0L2388.3 112.3L2392.0 116.1L2395.7 120.3L2399.5 124.9L2403.2 129.9L2406.9 135.3L2410.6 141.1L2414.3 147.3L2418.0 153.9L2421.7 160.8L2425.5 168.1L2429.2 175.7L2432.9 183.7L2436.6 192.0L2440.3 200.5L2444.0 209.4L2447.7 218.6L2451.5 228.0L2455.2 237.7L2458.9 247.6L2462.6 257.7L2466.3 268.0L2470.0 278.6L2473.7 289.3L2477.5 300.1L2481.2 311.1L2484.9 322.2L2488.6 333.4L2492.3 344.7L2496.0 356.1L2499.8 367.6L2503.5 379.0L2507.2 390.5" stroke="#fe4365" stroke-width="2" fill="none" stroke-linejoin="round"/><rect x="2378" y="117" width="125.5" height="51.5" fill="#363d46" stroke="#ffffff" stroke-width="2"/><path d="M2388 142.8H2450.5" stroke="#fe4365" stroke-width="2"/><g fill="#ffffff" font-family="DejaVu Sans, Liberation Sans, sans-serif" font-size="19.4"><text x="1580" y="105.4" text-anchor="end">1.0</text><text x="1580" y="251.65" text-anchor="end">0.5</text><text x="1580" y="397.9" text-anchor="end">0.0</text><text x="1580" y="544.15" text-anchor="end">-0.5</text><text x="1580" y="690.4" text-anchor="end">-1.0</text><text x="1615.6" y="725.4" text-anchor="middle">0</text><text x="1804.8" y="725.4" text-anchor="middle">2</text><text x="1994.0" y="725.4" text-anchor="middle">4</text><text x="2183.2" y="725.4" text-anchor="middle">6</text><text x="2372.3999999999996" y="725.4" text-anchor="middle">8</text><text x="2460" y="150.6" text-anchor="start">y1</text></g></svg></div>
<!-- p_panel -->
<div style="left:518.00px;top:950.00px;width:2042.00px;height:422.00px;background:#1e1e1e;border-top:2px solid #414141;"></div><span class="t ui" style="left:553.00px;top:973.98px;font-size:18.23px;color:#e7e7e7;letter-spacing:0.19px;">TERMINAL</span><div style="left:553.00px;top:1004.60px;width:93.00px;height:2.20px;background:#e7e7e7;"></div><span class="t ui" style="left:681.00px;top:973.98px;font-size:18.23px;color:#969696;letter-spacing:0.29px;">OUTPUT</span><span class="t ui" style="left:791.00px;top:973.98px;font-size:18.23px;color:#969696;letter-spacing:-0.21px;">DEBUG CONSOLE</span><span class="t ui" style="left:981.60px;top:973.98px;font-size:18.23px;color:#969696;letter-spacing:-0.21px;">PROBLEMS</span><div style="left:1093.50px;top:968.00px;width:39.50px;height:31.00px;background:#4d4d4d;border-radius:15.5px;"></div><span class="t ui" style="left:1101.60px;top:974.55px;font-size:18.02px;color:#ffffff;letter-spacing:-0.21px;">30</span><div style="left:1958.00px;top:961.00px;width:294.00px;height:43.00px;background:#3c3c3c;"></div><span class="t ui" style="left:1974.60px;top:973.21px;font-size:21.50px;color:#f0f0f0;letter-spacing:-0.25px;">1: Julia REPL</span><svg style="left:0.00px;top:0.00px;" width="10.00" height="10.00" viewBox="0 0 10.00 10.00" fill="none"><path d="M2221.3 978.4L2229.2 986.3L2237.1 978.4" stroke="#f0f0f0" stroke-width="1.7"/><path d="M2292.4 970.2V992.8M2281 981.5H2303.8" stroke="#c5c5c5" stroke-width="1.6"/><g transform="translate(2338.20 970.20)" stroke="#c5c5c5" stroke-width="1.8" fill="none"><rect x="0.9" y="0.9" width="20.7" height="20.4" rx="1.8"/><path d="M11.2 0.9V21.3"/></g><g stroke="#c5c5c5" stroke-width="1.6" fill="none"><path d="M2393.6 974.6H2412.4M2398.6 974.2V971.6Q2398.6 970.6 2399.8 970.6H2406.2Q2407.4 970.6 2407.4 971.6V974.2M2395.6 975V990.4Q2395.6 992.2 2397.6 992.2H2408.4Q2410.4 992.2 2410.4 990.4V975M2400.2 978.4V988.6M2403 978.4V988.6M2405.8 978.4V988.6"/></g><path d="M2450.8 986.2L2459.1 977.9L2467.4 986.2" stroke="#c5c5c5" stroke-width="1.6" fill="none"/><path d="M2507.2 975.2L2521.6 989.4M2521.6 975.2L2507.2 989.4" stroke="#c5c5c5" stroke-width="1.6"/></svg><span class="t mono" style="left:553.40px;top:1052.72px;font-size:23.50px;color:#cccccc;letter-spacing:0.35px;">4</span><span class="t mono" style="left:553.40px;top:1084.72px;font-size:23.50px;color:#cccccc;letter-spacing:0.35px;">5</span><span class="t mono" style="left:553.40px;top:1116.72px;font-size:23.50px;color:#cccccc;letter-spacing:0.35px;">6</span><span class="t mono" style="left:553.40px;top:1148.72px;font-size:23.50px;color:#cccccc;letter-spacing:0.35px;">7</span><span class="t mono" style="left:553.40px;top:1180.72px;font-size:23.50px;color:#cccccc;letter-spacing:0.35px;">8</span><span class="t mono" style="left:553.40px;top:1212.72px;font-size:23.50px;color:#cccccc;letter-spacing:0.35px;">9</span><span class="t mono" style="left:553.40px;top:1244.72px;font-size:23.50px;color:#cccccc;letter-spacing:0.35px;">10</span><span class="t mono" style="left:553.40px;top:1340.72px;font-size:23.50px;color:#23d18b;letter-spacing:0.35px;font-weight:700;">julia&gt;</span><div style="left:657.80px;top:1337.00px;width:15.40px;height:32.00px;border:1.5px solid #c0c0c0;"></div>
<!-- p_status -->
<div style="left:0.00px;top:1372.00px;width:2560.00px;height:38.00px;background:#007acc;"></div><div style="left:0.00px;top:1372.00px;width:59.30px;height:38.00px;background:#16825d;"></div><span class="t ui" style="left:102.20px;top:1382.59px;font-size:19.87px;color:#ffffff;letter-spacing:-0.23px;">sp/isdeflocals*</span><span class="t ui" style="left:354.40px;top:1382.59px;font-size:19.87px;color:#ffffff;letter-spacing:-0.23px;">0</span><span class="t ui" style="left:400.60px;top:1382.59px;font-size:19.87px;color:#ffffff;letter-spacing:-0.23px;">0</span><span class="t ui" style="left:448.40px;top:1382.59px;font-size:19.87px;color:#ffffff;letter-spacing:-0.23px;">30</span><span class="t ui" style="left:498.60px;top:1382.59px;font-size:19.87px;color:#ffffff;letter-spacing:-0.23px;">Julia env: v1</span><span class="t ui" style="left:1922.60px;top:1382.59px;font-size:19.87px;color:#ffffff;letter-spacing:-0.23px;">Ln 17, Col 4</span><span class="t ui" style="left:2062.40px;top:1382.59px;font-size:19.87px;color:#ffffff;letter-spacing:-0.23px;">Spaces: 4</span><span class="t ui" style="left:2180.40px;top:1382.59px;font-size:19.87px;color:#ffffff;letter-spacing:-0.23px;">UTF-8</span><span class="t ui" style="left:2263.60px;top:1382.59px;font-size:19.87px;color:#ffffff;letter-spacing:-0.23px;">LF</span><span class="t ui" style="left:2311.00px;top:1382.59px;font-size:19.87px;color:#ffffff;letter-spacing:-0.23px;">Julia</span><span class="t ui" style="left:2381.40px;top:1382.59px;font-size:19.87px;color:#ffffff;letter-spacing:-0.23px;">Main</span><svg style="left:0.00px;top:0.00px;" width="10.00" height="10.00" viewBox="0 0 10.00 10.00" fill="none"><path d="M22.2 1387.1L28.6 1393.7L22.2 1400.2M36.6 1380.8L30.1 1387.2L36.6 1393.6" stroke="#ffffff" stroke-width="1.8" fill="none"/><g stroke="#ffffff" stroke-width="1.8" fill="none"><circle cx="79.6" cy="1382.6" r="3.2"/><circle cx="79.6" cy="1399.4" r="3.2"/><circle cx="90.3" cy="1388.7" r="3.2"/><path d="M79.6 1385.8V1396.2M90.3 1391.9Q90.3 1394.4 85.4 1394.4Q79.6 1394.4 79.6 1396.2"/></g><g stroke="#ffffff" stroke-width="1.8" fill="none"><path d="M281.8 1396.8H279.8Q275.3 1396.8 275.3 1392.8Q275.3 1389.4 279.2 1389.2Q280.6 1385.6 284.4 1385.6Q288.8 1385.4 290.2 1389.4Q294.8 1389.6 294.8 1393Q294.8 1396.8 290.6 1396.8H289.2"/><path d="M285.5 1400.4V1391.6M281.7 1395.2L285.5 1391.4L289.3 1395.2"/></g><g stroke="#ffffff" stroke-width="1.8" fill="none"><circle cx="336.8" cy="1391" r="9.8"/><path d="M332.6 1386.8L341 1395.2M341 1386.8L332.6 1395.2"/></g><g stroke="#ffffff" stroke-width="1.8" fill="none" stroke-linejoin="round"><path d="M384.5 1381.6L394.4 1400H374.6Z"/><path d="M384.5 1388V1394M384.5 1395.6V1397.6"/></g><g stroke="#ffffff" stroke-width="1.8" fill="none"><circle cx="430.6" cy="1391" r="9.8"/><path d="M430.6 1389.6V1396.6M430.6 1385V1387.4"/></g><g stroke="#ffffff" stroke-width="1.7" fill="none"><circle cx="2465.4" cy="1389.6" r="3.6"/><path d="M2458.8 1403.6Q2458.8 1394.6 2465.4 1394.6Q2469 1394.6 2470.6 1397"/><path d="M2469.6 1380.6H2481V1390.6H2476L2472.6 1393.6V1390.6"/><path d="M2473.6 1386L2475.4 1387.8L2478.4 1384" stroke-width="1.4"/></g><g stroke="#ffffff" stroke-width="1.8" fill="none" stroke-linejoin="round"><path d="M2512.4 1398.4H2531.2L2528.8 1395V1389Q2528.8 1382 2521.8 1382Q2514.8 1382 2514.8 1389V1395Z"/><path d="M2519.4 1399.4Q2519.4 1401.8 2521.8 1401.8Q2524.2 1401.8 2524.2 1399.4"/></g></svg><div style="left:2559.00px;top:0.00px;width:1.00px;height:1410.00px;background:#d8d8d8;"></div>
<!-- p_suggest -->
<div style="left:695.00px;top:392.00px;width:570.00px;height:228.00px;background:#252526;border:2.2px solid #454545;overflow:hidden;"><div style="left:0.00px;top:0.00px;width:567.00px;height:228.00px;"><div style="left:0.00px;top:0.20px;width:567.00px;height:38.00px;background:#062f4a;"></div><span class="t mono" style="left:36.60px;top:6.67px;font-size:24.50px;letter-spacing:0.80px;"><span style="color:#ffffff">map</span></span><span class="t mono" style="left:36.60px;top:44.67px;font-size:24.50px;letter-spacing:0.80px;"><span style="color:#d4d4d4">map!</span></span><span class="t mono" style="left:36.60px;top:82.67px;font-size:24.50px;letter-spacing:0.80px;"><span style="color:#d4d4d4">mapfoldl</span></span><span class="t mono" style="left:36.60px;top:120.67px;font-size:24.50px;letter-spacing:0.80px;"><span style="color:#d4d4d4">mapfoldr</span></span><span class="t mono" style="left:36.60px;top:158.67px;font-size:24.50px;letter-spacing:0.80px;"><span style="color:#d4d4d4">mapreduce</span></span><span class="t mono" style="left:36.60px;top:196.67px;font-size:24.50px;letter-spacing:0.80px;"><span style="color:#d4d4d4">mapslices</span></span><svg style="left:0.00px;top:0.00px;" width="10.00" height="10.00" viewBox="0 0 10.00 10.00" fill="none"><g transform="translate(5.60 5.80)" stroke="#b180d7" stroke-width="1.55" fill="none"><path d="M11 1L20.2 6.3V17.6L11 23L1.8 17.6V6.3ZM1.8 6.3L11 11.8L20.2 6.3M11 11.8V23" stroke-linejoin="round"/></g><g transform="translate(5.60 43.80)" stroke="#b180d7" stroke-width="1.55" fill="none"><path d="M11 1L20.2 6.3V17.6L11 23L1.8 17.6V6.3ZM1.8 6.3L11 11.8L20.2 6.3M11 11.8V23" stroke-linejoin="round"/></g><g transform="translate(5.60 81.80)" stroke="#b180d7" stroke-width="1.55" fill="none"><path d="M11 1L20.2 6.3V17.6L11 23L1.8 17.6V6.3ZM1.8 6.3L11 11.8L20.2 6.3M11 11.8V23" stroke-linejoin="round"/></g><g transform="translate(5.60 119.80)" stroke="#b180d7" stroke-width="1.55" fill="none"><path d="M11 1L20.2 6.3V17.6L11 23L1.8 17.6V6.3ZM1.8 6.3L11 11.8L20.2 6.3M11 11.8V23" stroke-linejoin="round"/></g><g transform="translate(5.60 157.80)" stroke="#b180d7" stroke-width="1.55" fill="none"><path d="M11 1L20.2 6.3V17.6L11 23L1.8 17.6V6.3ZM1.8 6.3L11 11.8L20.2 6.3M11 11.8V23" stroke-linejoin="round"/></g><g transform="translate(5.60 195.80)" stroke="#b180d7" stroke-width="1.55" fill="none"><path d="M11 1L20.2 6.3V17.6L11 23L1.8 17.6V6.3ZM1.8 6.3L11 11.8L20.2 6.3M11 11.8V23" stroke-linejoin="round"/></g></svg></div></div><div style="left:1264.80px;top:392.00px;width:570.00px;height:455.60px;background:#252526;border:2.2px solid #454545;overflow:hidden;"><div style="left:-1267.00px;top:-394.20px;width:2560.00px;height:1410.00px;"><span class="t mono" style="left:1276.20px;top:408.07px;font-size:24.50px;letter-spacing:0.80px;"><span style="color:#dcdcaa">map</span><span style="color:#d4d4d4">(f, c...) -&gt; collection</span></span><span class="t ui" style="left:1276.20px;top:474.04px;font-size:24.78px;color:#cccccc;letter-spacing:-0.08px;">Transform collection</span><div style="left:1531.20px;top:473.60px;width:32.00px;height:26.60px;background:#1b1b1b;border-radius:4.5px;"></div><span class="t mono" style="left:1540.50px;top:476.05px;font-size:22.40px;letter-spacing:0.00px;"><span style="color:#d4d4d4">c</span></span><span class="t ui" style="left:1570.40px;top:474.04px;font-size:24.78px;color:#cccccc;letter-spacing:-0.48px;">by applying</span><div style="left:1717.60px;top:473.60px;width:32.00px;height:26.60px;background:#1b1b1b;border-radius:4.5px;"></div><span class="t mono" style="left:1726.90px;top:476.05px;font-size:22.40px;letter-spacing:0.00px;"><span style="color:#d4d4d4">f</span></span><span class="t ui" style="left:1757.00px;top:474.04px;font-size:24.78px;color:#cccccc;letter-spacing:-0.28px;">to</span><span class="t ui" style="left:1276.20px;top:512.44px;font-size:24.78px;color:#cccccc;letter-spacing:-0.40px;">each element. For multiple collection</span><span class="t ui" style="left:1276.20px;top:550.84px;font-size:24.78px;color:#cccccc;letter-spacing:-0.28px;">arguments, apply</span><div style="left:1495.60px;top:550.40px;width:32.00px;height:26.60px;background:#1b1b1b;border-radius:4.5px;"></div><span class="t mono" style="left:1504.90px;top:552.85px;font-size:22.40px;letter-spacing:0.00px;"><span style="color:#d4d4d4">f</span></span><span class="t ui" style="left:1535.60px;top:550.84px;font-size:24.78px;color:#cccccc;letter-spacing:-0.28px;">elementwise.</span><span class="t ui" style="left:1276.20px;top:616.04px;font-size:24.78px;color:#cccccc;letter-spacing:-0.48px;">See also:</span><div style="left:1388.60px;top:614.60px;width:136.40px;height:26.60px;background:#1b1b1b;border-radius:4.5px;"></div><span class="t mono" style="left:1398.40px;top:618.30px;font-size:21.40px;letter-spacing:0.02px;"><span style="color:#3794ff">mapslices</span></span><span class="t uib" style="left:1275.60px;top:680.93px;font-size:30.80px;color:#cccccc;letter-spacing:0.00px;font-weight:700;">Examples</span><span class="t mono" style="left:1276.20px;top:751.67px;font-size:24.50px;letter-spacing:0.80px;"><span style="color:#d4d4d4">julia&gt; </span><span style="color:#dcdcaa">map</span><span style="color:#d4d4d4">(x -&gt; x * </span><span style="color:#b5cea8">2</span><span style="color:#d4d4d4">, [</span><span style="color:#b5cea8">1</span><span style="color:#d4d4d4">, </span><span style="color:#b5cea8">2</span><span style="color:#d4d4d4">, </span><span style="color:#b5cea8">3</span><span style="color:#d4d4d4">])</span></span><span class="t mono" style="left:1276.20px;top:789.67px;font-size:24.50px;letter-spacing:0.80px;"><span style="color:#b5cea8">3</span><span style="color:#d4d4d4">-element Array{Int64,</span><span style="color:#b5cea8">1</span><span style="color:#d4d4d4">}:</span></span><span class="t mono" style="left:1276.20px;top:827.67px;font-size:24.50px;letter-spacing:0.80px;"><span style="color:#b5cea8"> 2</span></span><svg style="left:0.00px;top:0.00px;" width="10.00" height="10.00" viewBox="0 0 10.00 10.00" fill="none"><path d="M1804.2 402.8L1816.2 414.8M1816.2 402.8L1804.2 414.8" stroke="#c5c5c5" stroke-width="1.6"/></svg></div></div>
</body></html>
